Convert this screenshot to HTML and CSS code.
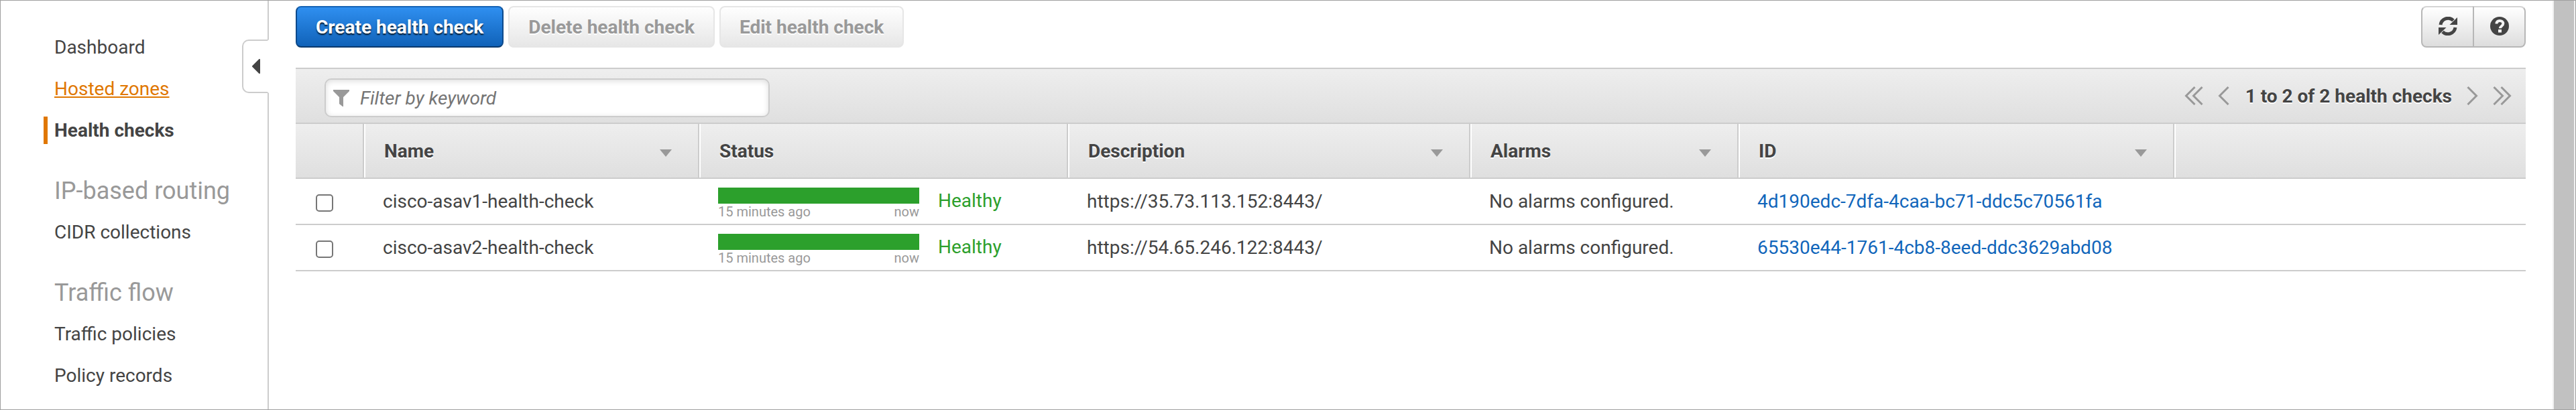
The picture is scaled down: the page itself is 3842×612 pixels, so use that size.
FILE: index.html
```html
<!DOCTYPE html>
<html lang="en">
<head>
<meta charset="utf-8">
<meta name="viewport" content="width=device-width, initial-scale=1">
<title>Health checks</title>
<link rel="stylesheet" href="styles.css">
</head>
<body>
<div class="app">
  <nav class="sidebar" aria-label="Main">
    <ul class="nav-list">
      <li><a class="nav-link" href="#dashboard">Dashboard</a></li>
      <li><a class="nav-link nav-link-hover" href="#zones">Hosted zones</a></li>
      <li class="nav-current"><a class="nav-link" href="#health" aria-current="page">Health checks</a></li>
    </ul>
    <h2 class="nav-heading">IP-based routing</h2>
    <ul class="nav-list">
      <li><a class="nav-link" href="#cidr">CIDR collections</a></li>
    </ul>
    <h2 class="nav-heading">Traffic flow</h2>
    <ul class="nav-list">
      <li><a class="nav-link" href="#policies">Traffic policies</a></li>
      <li><a class="nav-link" href="#records">Policy records</a></li>
    </ul>
    <button class="collapse" type="button" aria-label="Collapse navigation">
      <svg width="12" height="22" viewBox="0 0 12 22" aria-hidden="true"><path d="M11 1v20L1 11z" fill="#444" stroke="#444" stroke-width="2" stroke-linejoin="round"/></svg>
    </button>
  </nav>

  <main class="content">
    <div class="toolbar">
      <button class="btn btn-primary" type="button">Create health check</button>
      <button class="btn" type="button" disabled>Delete health check</button>
      <button class="btn" type="button" disabled>Edit health check</button>
      <div class="btn-group">
        <button class="icon-btn" type="button" aria-label="Refresh">
          <svg width="28" height="28" viewBox="0 0 28 28" aria-hidden="true">
            <path d="M3 12A11.3 11.3 0 0 1 22 5.500" fill="none" stroke="#444" stroke-width="5"/>
            <path d="M28 1v11H16.500z" fill="#444"/>
            <path d="M25 16A11.300 11.300 0 0 1 6 22.500" fill="none" stroke="#444" stroke-width="5"/>
            <path d="M0 27V16h11.500z" fill="#444"/>
          </svg>
        </button>
        <button class="icon-btn" type="button" aria-label="Help">
          <svg width="28" height="28" viewBox="0 0 28 28" aria-hidden="true">
            <circle cx="14" cy="14" r="14" fill="#444"/>
            <path d="M9.500 10.500C9.500 7.500 11.500 6 14.300 6s5 1.600 5 4.300c0 3.600-4.500 3.700-4.500 7" fill="none" stroke="#f4f4f4" stroke-width="4"/>
            <path d="M12 19h5v4.500h-5z" fill="#f4f4f4"/>
          </svg>
        </button>
      </div>
    </div>

    <section class="panel">
      <div class="filter-bar">
        <label class="filter">
          <svg width="24" height="25" viewBox="0 0 24 25" aria-hidden="true"><path d="M0 0h24v2l-9 9v14h-1l-5-4V11L0 2z" fill="#999"/></svg>
          <input class="filter-input" type="text" placeholder="Filter by keyword" aria-label="Filter by keyword">
        </label>
        <div class="pager">
          <button class="page-btn" type="button" aria-label="First page"><svg width="28" height="28" viewBox="0 0 28 28" aria-hidden="true"><path d="M15.500 1 2.500 14l13 13M26.500 1l-13 13 13 13"/></svg></button>
          <button class="page-btn" type="button" aria-label="Previous page"><svg width="17" height="28" viewBox="0 0 17 28" aria-hidden="true"><path d="M15.500 1 2.500 14l13 13"/></svg></button>
          <span class="page-text">1 to 2 of 2 health checks</span>
          <button class="page-btn" type="button" aria-label="Next page"><svg width="17" height="28" viewBox="0 0 17 28" aria-hidden="true"><path d="m1.500 1 13 13-13 13"/></svg></button>
          <button class="page-btn" type="button" aria-label="Last page"><svg width="28" height="28" viewBox="0 0 28 28" aria-hidden="true"><path d="m1.500 1 13 13-13 13M12.500 1l13 13-13 13"/></svg></button>
        </div>
      </div>

      <table class="grid">
        <colgroup>
          <col class="col-check"><col class="col-name"><col class="col-status"><col class="col-desc"><col class="col-alarms"><col class="col-id"><col>
        </colgroup>
        <thead>
          <tr>
            <th></th>
            <th scope="col"><div class="head">Name<span class="sort"></span></div></th>
            <th scope="col"><div class="head">Status</div></th>
            <th scope="col"><div class="head">Description<span class="sort"></span></div></th>
            <th scope="col"><div class="head">Alarms<span class="sort"></span></div></th>
            <th scope="col"><div class="head">ID<span class="sort"></span></div></th>
            <th></th>
          </tr>
        </thead>
        <tbody>
          <tr>
            <td><input class="check" type="checkbox" aria-label="Select cisco-asav1-health-check"></td>
            <td>cisco-asav1-health-check</td>
            <td>
              <div class="status">
                <div class="history"><div class="bar"></div><div class="range"><span>15 minutes ago</span><span>now</span></div></div>
                <span class="healthy">Healthy</span>
              </div>
            </td>
            <td>https://35.73.113.152:8443/</td>
            <td>No alarms configured.</td>
            <td><a class="link" href="#4d190edc">4d190edc-7dfa-4caa-bc71-ddc5c70561fa</a></td>
            <td></td>
          </tr>
          <tr>
            <td><input class="check" type="checkbox" aria-label="Select cisco-asav2-health-check"></td>
            <td>cisco-asav2-health-check</td>
            <td>
              <div class="status">
                <div class="history"><div class="bar"></div><div class="range"><span>15 minutes ago</span><span>now</span></div></div>
                <span class="healthy">Healthy</span>
              </div>
            </td>
            <td>https://54.65.246.122:8443/</td>
            <td>No alarms configured.</td>
            <td><a class="link" href="#65530e44">65530e44-1761-4cb8-8eed-ddc3629abd08</a></td>
            <td></td>
          </tr>
        </tbody>
      </table>
    </section>
  </main>
  <div class="scroll-track" aria-hidden="true"><div class="scroll-thumb"></div></div>
</div>
</body>
</html>
```
FILE: styles.css
```css
* { box-sizing: border-box; }

body {
  margin: 0;
  background: #fff;
  color: #444;
  font: 28px/41px Roboto, "Liberation Sans", sans-serif;
}

button, input { font: inherit; color: inherit; }

.app {
  display: flex;
  min-height: 100vh;
  border: 1px solid #a0a0a0;
}

/* Sidebar */
.sidebar {
  position: relative;
  flex: none;
  width: 400px;
  padding: 49px 0 30px 64px;
  border-right: 2px solid #ccc;
}

.nav-list {
  display: flex;
  flex-direction: column;
  gap: 21px;
  margin: 0;
  padding: 0;
  list-style: none;
}

.nav-list li {
  padding-left: 10px;
  border-left: 6px solid transparent;
}

.nav-list .nav-current {
  border-color: #e07700;
  font-weight: 700;
}

.nav-link { color: #444; text-decoration: none; }

.nav-link-hover {
  color: #e07700;
  text-decoration: underline;
}

.nav-heading {
  margin: 49px 0 20px;
  padding-left: 16px;
  color: #999;
  font-size: 36px;
  font-weight: 400;
  line-height: 42px;
}

.collapse {
  position: absolute;
  top: 58px;
  right: -2px;
  display: flex;
  align-items: center;
  width: 40px;
  height: 80px;
  padding: 0 0 0 13px;
  background: #fff;
  border: 2px solid #ccc;
  border-right: 2px solid #fff;
  border-radius: 10px 0 0 10px;
}

/* Toolbar */
.content {
  flex: 1;
  min-width: 0;
  padding: 8px 40px 40px;
}

.toolbar {
  display: flex;
  gap: 7px;
  margin-bottom: 30px;
}

.btn {
  height: 62px;
  padding: 1px 28px 0;
  border: 2px solid #e6e6e6;
  border-radius: 8px;
  background: linear-gradient(#fff, #e6e6e6) border-box;
  color: #999;
  font-weight: 700;
  text-shadow: 0 2px 0 #fff;
}

.btn-primary {
  border-color: #1563b5 #0d4a8c #09396d;
  background: linear-gradient(#2f8ff0, #1062b8);
  color: #fff;
  text-shadow: 0 2px 2px rgba(0, 0, 0, 0.8);
}

.btn-group { display: flex; margin-left: auto; }

.icon-btn {
  display: flex;
  align-items: center;
  justify-content: center;
  width: 79px;
  height: 62px;
  padding: 0 0 2px;
  border: 2px solid #b7b7b7;
  border-top-color: #d4d4d4;
  border-radius: 8px 0 0 8px;
  background: linear-gradient(#fff, #ddd);
}

.icon-btn + .icon-btn {
  margin-left: -2px;
  border-radius: 0 8px 8px 0;
}

/* Filter bar */
.filter-bar {
  display: flex;
  align-items: center;
  justify-content: space-between;
  height: 84px;
  padding: 0 21px 0 43px;
  border: solid #ccc;
  border-width: 2px 0;
  background: linear-gradient(#eee, #dfdfdf);
}

.filter {
  display: flex;
  align-items: center;
  gap: 14px;
  width: 664px;
  height: 58px;
  margin-top: 6px;
  padding: 1px 11px 0;
  border: 2px solid #ccc;
  border-radius: 10px;
  background: #fff;
  box-shadow: inset 0 2px 8px rgba(0, 0, 0, 0.14);
}

.filter-input {
  flex: 1;
  min-width: 0;
  height: 41px;
  padding: 0 2px;
  border: 0;
  outline: 0;
  background: transparent;
}

.filter-input::placeholder {
  color: #757575;
  font-style: italic;
  opacity: 1;
}

.pager {
  display: flex;
  align-items: center;
  gap: 22px;
}

.page-btn {
  display: flex;
  padding: 0;
  border: 0;
  background: none;
}

.page-btn path {
  fill: none;
  stroke: #999;
  stroke-width: 3;
}

.page-text {
  padding-left: 2px;
  font-weight: 700;
  text-shadow: 0 2px 0 #fff;
}

/* Table */
.grid {
  width: 100%;
  table-layout: fixed;
  border-spacing: 0;
}

.col-check { width: 102px; }
.col-name { width: 500px; }
.col-status { width: 550px; }
.col-desc { width: 600px; }
.col-alarms { width: 400px; }
.col-id { width: 650px; }

.grid th {
  height: 82px;
  padding: 1px 39px 0 28px;
  border: solid #ccc;
  border-width: 0 2px 2px 0;
  background: linear-gradient(#eee, #dfdfdf);
  box-shadow: inset 2px 0 0 #fff;
  text-align: left;
  text-shadow: 0 2px 0 #fff;
}

.grid th:first-child { box-shadow: none; }
.grid th:last-child { border-right: 0; }

.head {
  display: flex;
  align-items: center;
  justify-content: space-between;
  padding-left: 2px;
}

.sort {
  margin-top: 5px;
  border: 9px solid transparent;
  border-top: 11px solid #999;
  border-bottom: 0;
}

.grid td {
  height: 69px;
  padding: 0 0 0 28px;
  border-bottom: 2px solid #ccc;
  white-space: nowrap;
}

.check {
  display: block;
  width: 26px;
  height: 26px;
  margin: 4px 0 0 2px;
  border: 2px solid #767676;
  border-radius: 5px;
  background: #fff;
  appearance: none;
}

.status {
  display: flex;
  align-items: center;
  gap: 28px;
  padding-bottom: 2px;
}

.history { width: 300px; padding-top: 8px; }
.bar { height: 24px; background: #2ca02c; }

.range {
  display: flex;
  justify-content: space-between;
  color: #999;
  font-size: 20px;
  line-height: 24px;
}

.healthy { color: #2ca02c; }
.link { color: #1166bb; text-decoration: none; }

/* Scrollbar */
.scroll-track {
  display: flex;
  flex: none;
  width: 34px;
  padding: 0 2px;
  background: #f0f0f0;
}

.scroll-thumb { flex: 1; background: #c1c1c1; }
```
